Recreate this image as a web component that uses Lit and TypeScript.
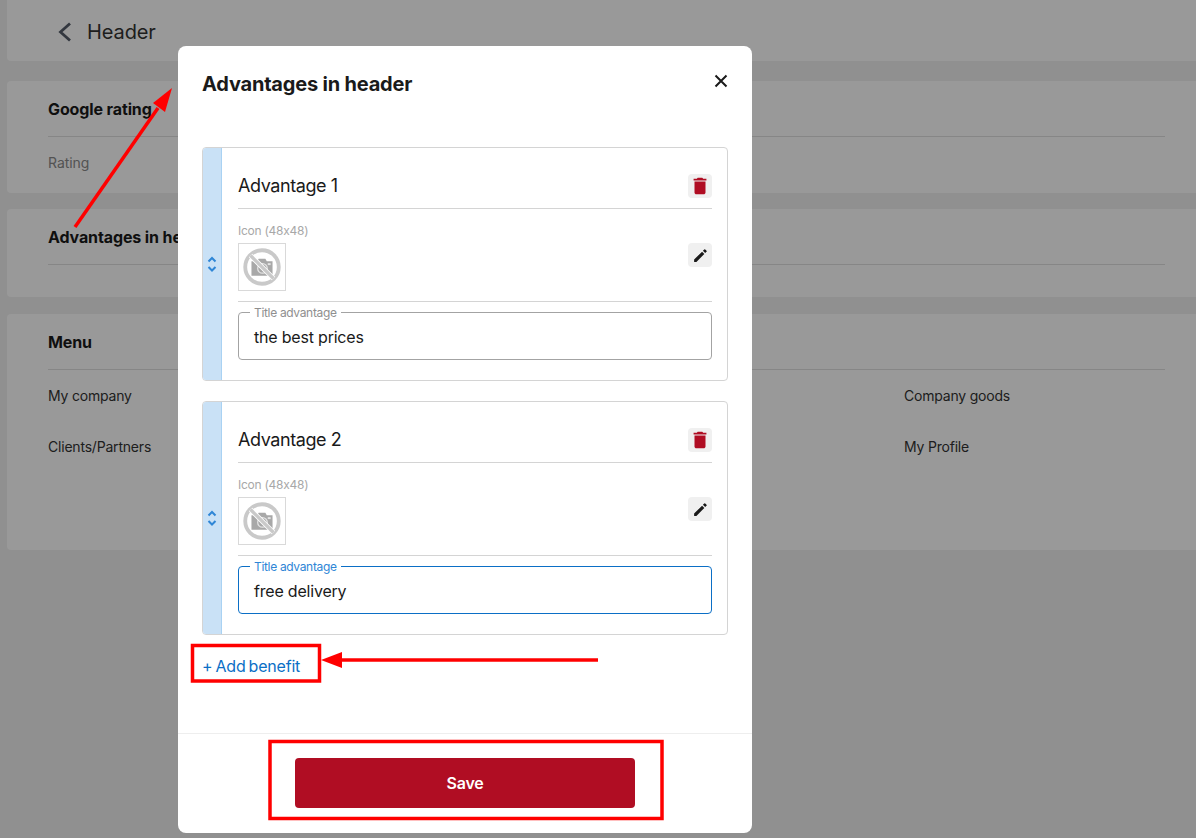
import { LitElement, html, css, svg } from "lit";
import { customElement } from "lit/decorators.js";

const noPhoto = html`<svg viewBox="0 0 48 48" width="46" height="46" aria-hidden="true">
  <path d="M13 18h6l1.500-2.500h7L29 18h6v15H13z" fill="#a8a8a8"/>
  <circle cx="24.500" cy="25.500" r="5" fill="none" stroke="#e4e4e4" stroke-width="1.300"/>
  <rect x="30" y="20" width="3" height="2" fill="#e4e4e4"/>
  <circle cx="24" cy="24" r="17.500" fill="none" stroke="#c9c9c9" stroke-width="4"/>
  <path d="M12 12 36 36" stroke="#fff" stroke-width="5"/>
  <path d="M12 12 36 36" stroke="#c9c9c9" stroke-width="3.500"/>
</svg>`;

const trash = html`<svg viewBox="0 0 24 24" width="22" height="22" aria-hidden="true"><path fill="#b00d23" d="M6 19c0 1.100.9 2 2 2h8c1.100 0 2-.9 2-2V7H6v12zM19 4h-3.500l-1-1h-5l-1 1H5v2h14V4z"/></svg>`;
const pen = html`<svg viewBox="0 0 24 24" width="17" height="17" aria-hidden="true"><path fill="#1a1a1a" d="M3 17.800V21h3.200L17.400 9.800l-3.200-3.200L3 17.800zM20.500 6.700a1 1 0 0 0 0-1.400l-1.800-1.800a1 1 0 0 0-1.400 0l-1.900 1.900 3.200 3.200 1.900-1.900z"/></svg>`;
const grip = html`<svg viewBox="0 0 12 20" width="12" height="20" aria-hidden="true"><path d="M2.500 7.500 6 4l3.500 3.500M2.500 13 6 16.500 9.500 13" fill="none" stroke="#2f86d6" stroke-width="2"/></svg>`;

@customElement("app-root")
export class AppRoot extends LitElement {
  static styles = css`
    :host { display: block; position: relative; height: 838px; overflow: hidden; background: #f0f0f0;
      font-family: "Inter", "Noto Sans", sans-serif; color: #1a1a1a; font-feature-settings: "calt" 0; }
    .page { display: flex; flex-direction: column; padding-left: 7px; }
    .card { background: #fff; border-radius: 4px 0 0 4px; padding: 0 31px 0 41px; }
    .top { height: 61px; box-sizing: border-box; padding-top: 2px; display: flex; align-items: center; gap: 14px; padding-left: 50px; margin-bottom: 20px; font-size: 20px; letter-spacing: -.1px; color: #333; border-radius: 0 0 0 4px; }
    .top svg { display: block; }
    .c-title { height: 55px; display: flex; align-items: center; font-size: 16px; font-weight: 700; letter-spacing: -.12px; border-bottom: 1px solid #e0e0e0; }
    .google { height: 112px; margin-bottom: 16px; }
    .adv { height: 88px; margin-bottom: 17px; }
    .menu { height: 236px; }
    .rating { font-size: 14px; color: #8a8a8a; margin-top: 17px; letter-spacing: -.05px; }
    .grid { display: grid; grid-template-columns: repeat(4, 285.330px); grid-auto-rows: 51px; padding-top: 17px; font-size: 14px; color: #333; letter-spacing: -.2px; line-height: 17px; }

    .overlay { position: absolute; inset: 0; background: rgba(0,0,0,.4); }
    .modal { position: absolute; left: 178px; top: 46px; width: 574px; height: 787px; background: #fff; border-radius: 8px; display: flex; flex-direction: column; box-sizing: border-box; }
    .m-head { display: flex; justify-content: space-between; align-items: center; padding: 24px 24px 0; height: 28px; margin-bottom: 49px; }
    .m-head h2 { margin: 0; font-size: 20px; font-weight: 700; letter-spacing: -.2px; line-height: 28px; color: #1a1a1a; }
    .close { display: block; margin-top: -6px; }
    .list { display: flex; flex-direction: column; gap: 20px; padding: 0 24px; }
    .item { display: flex; height: 234px; box-sizing: border-box; border: 1px solid #d4d4d4; border-radius: 4px; overflow: hidden; }
    .stripe { width: 19px; box-sizing: border-box; flex: none; background: #c9e1f6; border-right: 1px solid #a9d2f3; display: flex; align-items: center; justify-content: center; }
    .stripe svg { display: block; }
    .body { flex: 1; padding: 0 15px 0 16px; display: flex; flex-direction: column; }
    .i-head { height: 61px; box-sizing: border-box; padding-top: 26px; display: flex; justify-content: space-between; align-items: flex-start; border-bottom: 1px solid #d4d4d4; }
    .i-title { font-size: 18px; line-height: 24px; letter-spacing: -.42px; }
    .sq { width: 24px; height: 24px; border-radius: 4px; background: #f0f0f0; display: flex; align-items: center; justify-content: center; }
    .i-icon { height: 93px; box-sizing: border-box; border-bottom: 1px solid #d4d4d4; display: flex; justify-content: space-between; }
    .lbl { font-size: 12px; line-height: 14px; color: #a8a8a8; letter-spacing: -.25px; padding-top: 15px; margin-bottom: 5px; }
    .box { width: 48px; height: 48px; box-sizing: border-box; border: 1px solid #d9d9d9; display: flex; align-items: center; justify-content: center; }
    .i-icon .sq { margin-top: 34px; }
    .field { position: relative; margin-top: 10px; height: 48px; box-sizing: border-box; border: 1px solid #a3a3a3; border-radius: 4px; padding: 2px 15px 0; display: flex; align-items: center; font-size: 16px; letter-spacing: -.2px; }
    .field span { position: absolute; left: 11px; top: -7px; background: #fff; padding: 0 4px; font-size: 12px; line-height: 14px; letter-spacing: -.33px; color: #8f8f8f; }
    .field.on { border-color: #0b6fc6; }
    .field.on span { color: #2f86d6; }
    .add { padding: 22px 23px 0 24px; font-size: 16px; line-height: 19px; color: #0b6fc6; letter-spacing: -.2px; word-spacing: -1.200px; }
    .foot { margin-top: auto; border-top: 1px solid #eee; padding: 24px 117px 25px; }
    .save { height: 50px; background: #b00d23; color: #fff; border-radius: 4px; display: flex; align-items: center; justify-content: center; font-weight: 600; font-size: 16px; letter-spacing: -.2px; }
    .marks { position: absolute; inset: 0; width: 1196px; height: 838px; pointer-events: none; }
  `;

  private item(title: string, value: string, on: boolean) {
    return html`<div class="item">
      <div class="stripe">${grip}</div>
      <div class="body">
        <div class="i-head"><div class="i-title">${title}</div><div class="sq">${trash}</div></div>
        <div class="i-icon">
          <div><div class="lbl">Icon (48x48)</div><div class="box">${noPhoto}</div></div>
          <div class="sq">${pen}</div>
        </div>
        <div class="field ${on ? "on" : ""}"><span>Title advantage</span>${value}</div>
      </div>
    </div>`;
  }

  render() {
    return html`
      <div class="page">
        <div class="card top">
          <svg viewBox="0 0 16 20" width="16" height="20" aria-hidden="true"><path d="M13 1.500 3.500 10l9.500 8.500" fill="none" stroke="#555d69" stroke-width="2.800"/></svg>
          Header
        </div>
        <div class="card google"><div class="c-title">Google rating</div><div class="rating">Rating</div></div>
        <div class="card adv"><div class="c-title">Advantages in header</div></div>
        <div class="card menu">
          <div class="c-title">Menu</div>
          <div class="grid">
            <div>My company</div><div></div><div></div><div>Company goods</div>
            <div>Clients/Partners</div><div></div><div></div><div>My Profile</div>
          </div>
        </div>
      </div>
      <div class="overlay"></div>
      <div class="modal">
        <div class="m-head">
          <h2>Advantages in header</h2>
          <svg class="close" viewBox="0 0 14 14" width="14" height="14" aria-hidden="true"><path d="M1.500 1.500l11 11M12.500 1.500l-11 11" stroke="#1a1a1a" stroke-width="2"/></svg>
        </div>
        <div class="list">
          ${this.item("Advantage 1", "the best prices", false)}
          ${this.item("Advantage 2", "free delivery", true)}
        </div>
        <div class="add">+ Add benefit</div>
        <div class="foot"><div class="save">Save</div></div>
      </div>
      <svg class="marks" viewBox="0 0 1196 838" aria-hidden="true">
        ${svg`
          <path d="M75 227 158 108" stroke="#f00" stroke-width="3.500" fill="none"/>
          <path d="M172 88 153 103 165 112z" fill="#f00"/>
          <path d="M598 660H340" stroke="#f00" stroke-width="3.500" fill="none"/>
          <path d="M321 660 342 652v16z" fill="#f00"/>
          <rect x="192.500" y="645.500" width="127" height="35.500" fill="none" stroke="#f00" stroke-width="3.500"/>
          <rect x="270" y="741.500" width="392" height="77" fill="none" stroke="#f00" stroke-width="3.500"/>
        `}
      </svg>
    `;
  }
}
